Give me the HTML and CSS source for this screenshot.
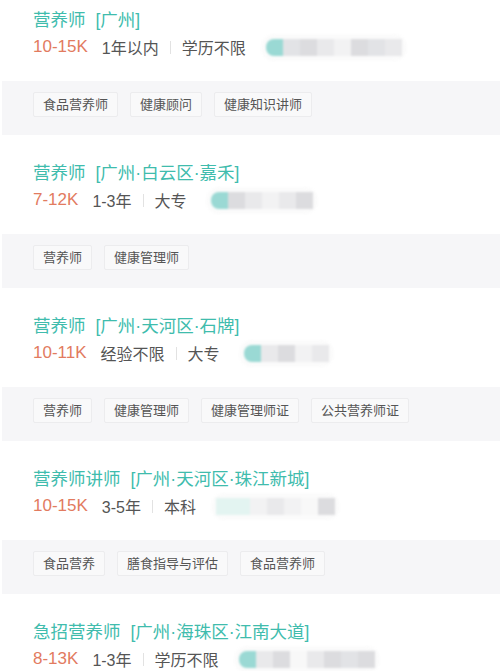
FILE: index.html
```html
<!DOCTYPE html>
<html lang="zh-CN">
<head>
    <meta charset="UTF-8">
    <meta name="viewport" content="width=device-width, initial-scale=1.0">
    <title>营养师职位</title>
    <link rel="stylesheet" href="styles.css">
</head>
<body>

    <!-- 职位列表 -->
    <div class="job-list">

        <div class="job-card first">
            <div class="job-info">
                <div class="job-title">营养师<span class="job-area">[广州]</span></div>
                <div class="job-meta">
                    <span class="salary">10-15K</span>
                    <span class="meta-text">1年以内</span>
                    <span class="meta-sep"></span>
                    <span class="meta-text">学历不限</span>
                    <span class="company-blur">
                        <i class="b-teal"></i><i class="b-g1"></i><i class="b-g2"></i><i class="b-g3"></i><i class="b-g4"></i><i class="b-g2"></i><i class="b-g1"></i><i class="b-g3"></i>
                    </span>
                </div>
            </div>
            <div class="job-tags">
                <span class="tag">食品营养师</span>
                <span class="tag">健康顾问</span>
                <span class="tag">健康知识讲师</span>
            </div>
        </div>

        <div class="job-card">
            <div class="job-info">
                <div class="job-title">营养师<span class="job-area">[广州·白云区·嘉禾]</span></div>
                <div class="job-meta">
                    <span class="salary">7-12K</span>
                    <span class="meta-text">1-3年</span>
                    <span class="meta-sep"></span>
                    <span class="meta-text">大专</span>
                    <span class="company-blur short">
                        <i class="b-teal"></i><i class="b-g2"></i><i class="b-g3"></i><i class="b-g4"></i><i class="b-g3"></i><i class="b-g2"></i>
                    </span>
                </div>
            </div>
            <div class="job-tags">
                <span class="tag">营养师</span>
                <span class="tag">健康管理师</span>
            </div>
        </div>

        <div class="job-card">
            <div class="job-info">
                <div class="job-title">营养师<span class="job-area">[广州·天河区·石牌]</span></div>
                <div class="job-meta">
                    <span class="salary">10-11K</span>
                    <span class="meta-text">经验不限</span>
                    <span class="meta-sep"></span>
                    <span class="meta-text">大专</span>
                    <span class="company-blur short">
                        <i class="b-teal"></i><i class="b-g3"></i><i class="b-g2"></i><i class="b-g4"></i><i class="b-g3"></i>
                    </span>
                </div>
            </div>
            <div class="job-tags">
                <span class="tag">营养师</span>
                <span class="tag">健康管理师</span>
                <span class="tag">健康管理师证</span>
                <span class="tag">公共营养师证</span>
            </div>
        </div>

        <div class="job-card">
            <div class="job-info">
                <div class="job-title">营养师讲师<span class="job-area">[广州·天河区·珠江新城]</span></div>
                <div class="job-meta">
                    <span class="salary">10-15K</span>
                    <span class="meta-text">3-5年</span>
                    <span class="meta-sep"></span>
                    <span class="meta-text">本科</span>
                    <span class="company-blur">
                        <i class="b-mint"></i><i class="b-mint"></i><i class="b-g4"></i><i class="b-g3"></i><i class="b-g4"></i><i class="b-white"></i><i class="b-g2"></i>
                    </span>
                </div>
            </div>
            <div class="job-tags">
                <span class="tag">食品营养</span>
                <span class="tag">膳食指导与评估</span>
                <span class="tag">食品营养师</span>
            </div>
        </div>

        <div class="job-card">
            <div class="job-info">
                <div class="job-title">急招营养师<span class="job-area">[广州·海珠区·江南大道]</span></div>
                <div class="job-meta">
                    <span class="salary">8-13K</span>
                    <span class="meta-text">1-3年</span>
                    <span class="meta-sep"></span>
                    <span class="meta-text">学历不限</span>
                    <span class="company-blur">
                        <i class="b-teal"></i><i class="b-g3"></i><i class="b-g2"></i><i class="b-white"></i><i class="b-g3"></i><i class="b-g2"></i><i class="b-g1"></i><i class="b-g2"></i>
                    </span>
                </div>
            </div>
        </div>

    </div>

</body>
</html>
```

FILE: styles.css
```css
/* Estilos generales */
body {
    margin: 0;
    background-color: #fff;
    font-family: "Liberation Sans", "Noto Sans CJK SC", sans-serif;
    color: #555;
    overflow: hidden;
}

/* Tarjeta de puesto */
.job-card {
    padding-top: 27px;
}

.job-card.first {
    padding-top: 9px;
}

.job-info {
    padding-left: 33px;
    padding-bottom: 22px;
}

.job-title {
    font-size: 17.5px;
    line-height: 22px;
    color: #40bcad;
    white-space: nowrap;
}

.job-area {
    margin-left: 10px;
}

/* Salario, experiencia, estudios */
.job-meta {
    display: flex;
    align-items: center;
    margin-top: 4px;
    height: 24px;
    white-space: nowrap;
}

.salary {
    font-size: 17px;
    color: #e27b5f;
    margin-right: 14px;
}

.meta-text {
    font-size: 16px;
    color: #555;
}

.meta-sep {
    width: 1px;
    height: 13px;
    background-color: #e2e2e2;
    margin: 0 11px;
}

/* Nombre de empresa difuminado */
.company-blur {
    display: flex;
    margin-left: 16px;
    padding: 4px 4px;
    border-radius: 12px;
    background-color: #fbfbfb;
    box-shadow: 0 0 3px rgba(0, 0, 0, 0.04);
    filter: blur(1px);
}

.company-blur.short {
    margin-left: 20px;
}

.company-blur i {
    display: block;
    width: 17px;
    height: 17px;
}

.company-blur .b-teal {
    background-color: #9ad9d4;
    border-radius: 8px 0 0 8px;
}
.company-blur .b-mint {
    background-color: #e3f4f1;
}
.company-blur .b-g1 {
    background-color: #e2e3e6;
}
.company-blur .b-g2 {
    background-color: #dcdcdf;
}
.company-blur .b-g3 {
    background-color: #e9e9eb;
}
.company-blur .b-g4 {
    background-color: #f2f2f3;
}
.company-blur .b-white {
    background-color: #f8f8f8;
}

/* Etiquetas */
.job-tags {
    display: flex;
    gap: 12px;
    margin-left: 2px;
    padding: 11px 0 18px 31px;
    background-color: #f6f6f8;
}

.tag {
    font-size: 13px;
    line-height: 23px;
    padding: 0 9px;
    color: #555;
    background-color: #f9f9fa;
    border: 1px solid #ececee;
    border-radius: 2px;
    white-space: nowrap;
}
```
